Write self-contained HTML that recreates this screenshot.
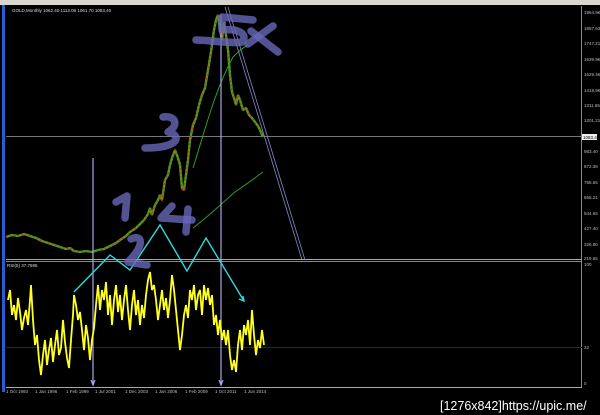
<!DOCTYPE html>
<html><head><meta charset="utf-8"><style>
html,body{margin:0;padding:0;background:#000;width:600px;height:415px;overflow:hidden}
svg{display:block}
text{font-family:"Liberation Sans",sans-serif}
</style></head><body>
<svg width="600" height="415" viewBox="0 0 600 415" xmlns="http://www.w3.org/2000/svg">
<rect width="600" height="415" fill="#000"/>
<rect x="0" y="0" width="600" height="5" fill="#d8d6cf"/>
<rect x="2" y="5" width="3" height="387" fill="#2a5bd0"/>
<line x1="581.5" y1="6" x2="581.5" y2="388" stroke="#888" stroke-width="1"/>
<line x1="6" y1="259.5" x2="582" y2="259.5" stroke="#aaa" stroke-width="1"/>
<line x1="6" y1="261.5" x2="582" y2="261.5" stroke="#888" stroke-width="1"/>
<line x1="6" y1="387.5" x2="582" y2="387.5" stroke="#aaa" stroke-width="1"/>
<line x1="6" y1="136.5" x2="582" y2="136.5" stroke="#777" stroke-width="1"/>
<line x1="6" y1="347.5" x2="582" y2="347.5" stroke="#3a1a3a" stroke-width="1"/>
<g fill="#bbb" font-size="4.5">
<text x="584" y="14">1964.9€</text><text x="584" y="30">1857.63</text><text x="584" y="45">1747.21</text>
<text x="584" y="61">1639.9€</text><text x="584" y="76">1529.4€</text><text x="584" y="92">1418.9€</text>
<text x="584" y="107">1311.65</text><text x="584" y="122">1201.21</text>
<text x="584" y="153">983.40</text><text x="584" y="168">872.38</text><text x="584" y="184">765.65</text>
<text x="584" y="199">655.21</text><text x="584" y="215">544.65</text><text x="584" y="230">427.40</text>
<text x="584" y="246">326.90</text><text x="584" y="260">219.65</text>
<text x="584" y="266">100</text><text x="584" y="349">32</text><text x="584" y="385">0</text>
</g>
<rect x="582" y="134" width="15" height="6" fill="#eee"/>
<text x="583" y="139" font-size="4.5" fill="#000">1083.40</text>
<text x="12" y="12" font-size="4.5" fill="#ddd">GOLD,Monthly  1062.40  1113.06  1061.70  1083.40</text>
<text x="7" y="267" font-size="4.5" fill="#ddd">RSI(5) 37.7695</text>
<g fill="#bbb" font-size="4.5">
<text x="6" y="393">1 Oct 1993</text><text x="35" y="393">1 Jan 1996</text><text x="66" y="393">1 Feb 1999</text>
<text x="95" y="393">1 Jul 2001</text><text x="125" y="393">1 Dec 2003</text><text x="155" y="393">1 Jan 2006</text>
<text x="185" y="393">1 Feb 2009</text><text x="215" y="393">1 Oct 2011</text><text x="244" y="393">1 Jun 2014</text>
</g>
<line x1="225" y1="7" x2="302" y2="260" stroke="#8888cc" stroke-width="0.8"/>
<line x1="228" y1="7" x2="305" y2="260" stroke="#8888cc" stroke-width="0.8"/>
<polyline fill="none" stroke="#4aa020" stroke-width="2.4" stroke-linejoin="bevel" points="6,237 12,235 18,236 24,234 30,236 36,238 42,241 48,243 54,245 60,247 66,249 70,248 74,251 80,252 86,251 92,252 98,250 104,249 110,246 116,243 120,240 126,236 130,232 136,228 140,224 144,220 148,214 150,208 152,215 155,205 158,200 160,195 162,200 165,180 168,175 170,165 172,158 175,150 178,158 180,165 182,188 184,190 186,175 188,160 190,140 193,125 196,118 199,105 202,95 205,88 208,70 210,58 212,45 214,30 216,20 218,15 220,30 222,40 224,22 226,35 228,50 230,75 232,92 234,98 236,105 238,95 240,100 243,110 246,108 249,115 252,118 255,122 258,126 261,132 263,137"/>
<polyline fill="none" stroke="#c83018" stroke-width="1.4" stroke-dasharray="1.5,2.5" points="6,237 12,235 18,236 24,234 30,236 36,238 42,241 48,243 54,245 60,247 66,249 70,248 74,251 80,252 86,251 92,252 98,250 104,249 110,246 116,243 120,240 126,236 130,232 136,228 140,224 144,220 148,214 150,208 152,215 155,205 158,200 160,195 162,200 165,180 168,175 170,165 172,158 175,150 178,158 180,165 182,188 184,190 186,175 188,160 190,140 193,125 196,118 199,105 202,95 205,88 208,70 210,58 212,45 214,30 216,20 218,15 220,30 222,40 224,22 226,35 228,50 230,75 232,92 234,98 236,105 238,95 240,100 243,110 246,108 249,115 252,118 255,122 258,126 261,132 263,137"/>
<path d="M193,168 C205,130 215,90 233,57 C240,50 244,47 248,45" fill="none" stroke="#2aa02a" stroke-width="1"/>
<path d="M193,228 C210,215 220,205 235,192 C245,185 255,178 263,172" fill="none" stroke="#2a9a2a" stroke-width="1"/>
<g stroke="#a8a8e8" stroke-width="1.2" fill="none">
<line x1="93" y1="158" x2="93" y2="384"/><path d="M91,380 L93,385 L95,380"/>
<line x1="221" y1="15" x2="221" y2="384"/><path d="M219,380 L221,385 L223,380"/>
</g>
<polyline fill="none" stroke="#ffff20" stroke-width="1.8" stroke-linejoin="bevel" points="8,300 10,290 12,315 14,305 16,320 18,298 20,312 22,330 24,318 26,310 28,325 30,300 31,285 33,320 35,345 37,335 39,360 41,375 43,355 45,340 47,365 49,350 51,338 53,362 55,345 57,330 59,355 61,348 63,320 65,342 67,358 69,368 71,340 73,315 74,295 76,305 78,320 80,312 82,330 84,350 86,325 88,338 90,360 92,340 94,328 96,305 98,285 100,310 102,290 104,300 106,282 108,315 110,295 112,325 114,300 116,285 118,312 120,295 122,320 124,300 126,285 128,310 130,330 132,305 134,290 136,315 138,300 140,325 142,305 144,318 146,295 148,280 150,272 152,290 154,285 156,300 158,320 160,305 162,290 164,310 166,298 168,318 170,300 172,275 174,290 176,310 178,330 180,350 182,335 184,315 186,305 188,318 190,290 192,300 194,285 196,310 198,295 200,290 202,315 204,285 206,300 208,288 210,305 212,295 214,325 216,315 218,335 220,320 222,340 224,330 226,345 228,330 230,355 232,370 234,360 236,372 238,345 240,330 242,350 244,325 246,335 248,320 250,345 252,310 254,335 256,355 258,340 260,348 262,330 264,345"/>
<polyline fill="none" stroke="#30d8e0" stroke-width="1.4" points="74,292 110,255 130,270 160,225 187,271 206,238 244,301"/>
<path d="M239,299 L244,301 L243,296" fill="none" stroke="#30d8e0" stroke-width="1.4"/>
<g fill="none" stroke="#6868b8" stroke-opacity="0.8" stroke-width="7.5" stroke-linecap="round" stroke-linejoin="round">
<path d="M253,20 L222,17 L222,30 C240,28 248,35 242,42 C230,44 210,40 196,40"/>
<path d="M251,31 L278,52"/><path d="M273,26 L248,44"/>
<path d="M163,117 C175,115 180,125 168,132 C182,135 180,148 145,148"/>
<path d="M116,202 L127,196 L125,218"/>
<path d="M172,206 L161,218 L192,220"/><path d="M188,209 L186,232"/>
<path d="M131,239 C142,234 146,244 128,262 L147,265"/>
</g>
<text x="440" y="410" font-size="12.5" fill="#fff" font-family="Liberation Mono,monospace">[1276x842]https://upic.me/</text>
</svg>
</body></html>
